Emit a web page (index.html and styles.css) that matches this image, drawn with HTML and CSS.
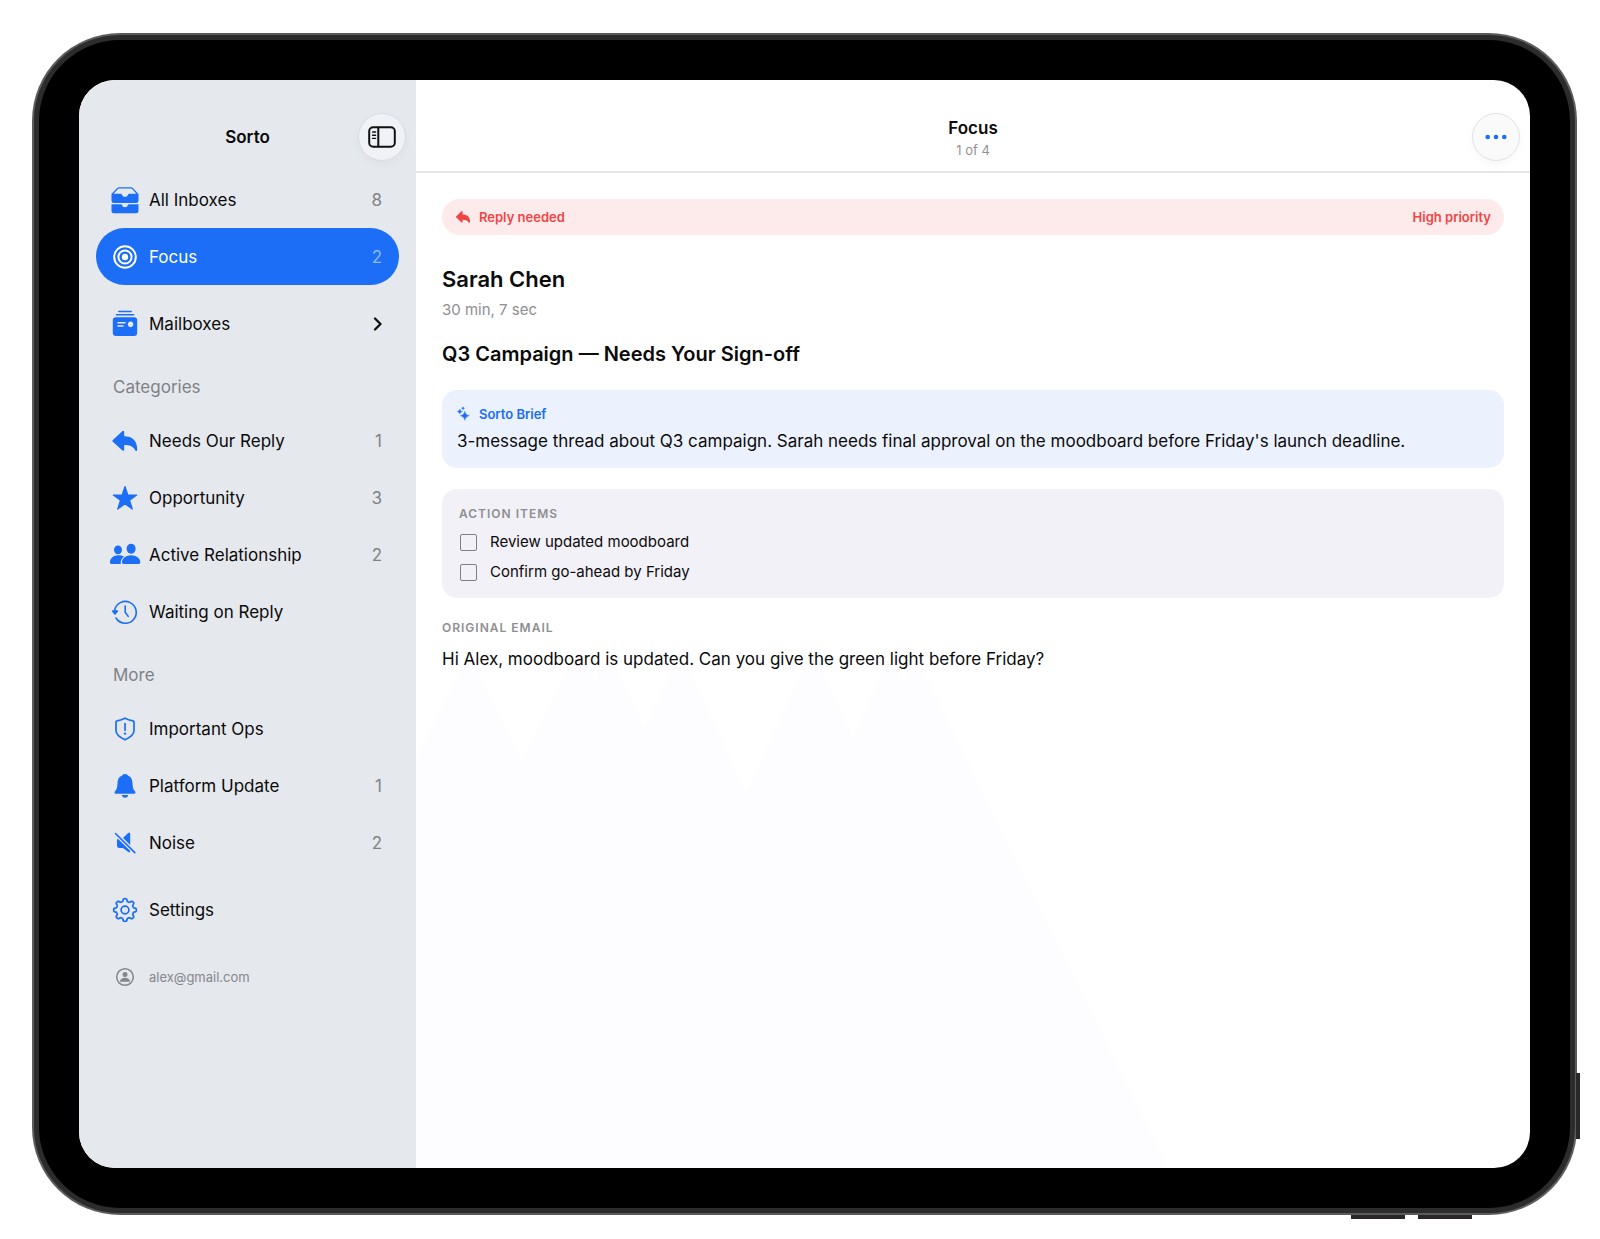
FILE: index.html
```html
<!DOCTYPE html>
<html lang="en">
<head>
<meta charset="utf-8">
<meta name="viewport" content="width=device-width, initial-scale=1">
<title>Sorto</title>
<link rel="stylesheet" href="styles.css">
</head>
<body>
<div class="device">
  <span class="key key-power"></span>
  <span class="key key-volume-up"></span>
  <span class="key key-volume-down"></span>
  <div class="bezel">
  <div class="screen">
    <aside class="sidebar">
      <header class="sidebar-header">
        <h1 class="title">Sorto</h1>
        <button class="round-button" type="button" aria-label="Toggle sidebar">
          <svg width="28" height="22" viewBox="0 0 28 22" fill="none" stroke="#111" stroke-width="2">
            <rect x="1.2" y="1.2" width="25.6" height="19.6" rx="4"/>
            <path d="M10.3 1v20"/>
            <path d="M4.6 6h3M4.6 9.2h3M4.6 12.4h3" stroke-width="1.4" stroke-linecap="round"/>
          </svg>
        </button>
      </header>
      <nav class="nav">
        <a class="item" href="#inboxes">
          <svg class="icon" viewBox="0 0 30 30">
            <path d="M2.2 9.200 7.400 3.600Q8.200 2.800 9.400 2.800H20.600Q21.800 2.800 22.600 3.600L27.800 9.200" fill="none" stroke="currentColor" stroke-width="1.300"/>
            <path d="M1.500 8.800h9.300q.8 0 1 .8a3.300 3.300 0 0 0 6.400 0q.2-.8 1-.8h9.300v7q0 2.300-2.300 2.300H3.800q-2.300 0-2.300-2.300z"/>
            <path d="M1.500 19.200h9.500q.8 0 1 .8a3.100 3.100 0 0 0 6 0q.2-.8 1-.8h9.500v6.500q0 2.500-2.500 2.500H4q-2.500 0-2.500-2.500z"/>
          </svg>
          <span class="label">All Inboxes</span><span class="count">8</span>
        </a>
        <a class="item selected" href="#focus" aria-current="page">
          <svg class="icon" viewBox="0 0 30 30" fill="none" stroke="currentColor" stroke-width="2">
            <circle cx="15" cy="15" r="10.800"/><circle cx="15" cy="15" r="6.600"/><circle cx="15" cy="15" r="3.200" fill="currentColor" stroke="none"/>
          </svg>
          <span class="label">Focus</span><span class="count">2</span>
        </a>
        <a class="item spaced" href="#mailboxes">
          <svg class="icon" viewBox="0 0 30 30">
            <path d="M8.800 2.500h12.400M6.400 5.800h17.200" fill="none" stroke="currentColor" stroke-width="1.500" stroke-linecap="round"/>
            <path fill-rule="evenodd" d="M6 8.300h18q3.200 0 3.200 3.200v12.300q0 3.200-3.200 3.200H6q-3.200 0-3.200-3.200V11.500q0-3.200 3.200-3.200zM8 13a.8.8 0 0 0 0 1.600h7a.8.8 0 0 0 0-1.600zM8 16.200a.8.8 0 0 0 0 1.600h5a.8.8 0 0 0 0-1.600zM20.600 12.600a2.800 2.800 0 1 0 .01 0z"/>
          </svg>
          <span class="label">Mailboxes</span>
          <svg class="chevron" width="10" height="14" viewBox="0 0 10 14" fill="none" stroke="#111" stroke-width="2.300" stroke-linecap="round" stroke-linejoin="round"><path d="M3 1.500 8.500 7 3 12.500"/></svg>
        </a>
        <h2 class="section">Categories</h2>
        <a class="item" href="#reply">
          <svg class="icon" viewBox="0 0 30 30"><path d="M2.600 14.200 12.200 5.300q1.800-1.400 2 .7v4.200c8.500 0 13 4.500 13 13.600 0 1.500-1.300 1.800-2 .4-2.200-4-5.600-5.200-11-5.200v4.600q-.2 2.100-2 .7L2.600 15.600q-.7-.7 0-1.400z"/></svg>
          <span class="label">Needs Our Reply</span><span class="count">1</span>
        </a>
        <a class="item" href="#opportunity">
          <svg class="icon" viewBox="0 0 30 30" stroke="currentColor" stroke-linejoin="round" stroke-width="1.200"><path d="M15 3.500 17.800 12h8.900l-7.200 5.200 2.800 8.900-7.300-5.400-7.300 5.400 2.800-8.900L3.300 12h8.900z"/></svg>
          <span class="label">Opportunity</span><span class="count">3</span>
        </a>
        <a class="item" href="#relationship">
          <svg class="icon" viewBox="0 0 30 30">
            <ellipse cx="8" cy="9.800" rx="4" ry="4.400"/><ellipse cx="21.100" cy="8.800" rx="4.500" ry="5"/>
            <path d="M10.800 24c-.5-3.100.8-5.800 3.200-7.500-1.500-.8-3.400-1.300-5.900-1.300C3.400 15.200.1 18.500-.1 22.200q0 1.600 1.600 1.800z"/>
            <path d="M21.100 15.300c5.200 0 9.100 3.200 9.200 7 0 1.200-.6 1.700-1.900 1.700H13.900c-1.300 0-1.900-.5-1.900-1.700.1-3.800 3.900-7 9.100-7z"/>
          </svg>
          <span class="label">Active Relationship</span><span class="count">2</span>
        </a>
        <a class="item" href="#waiting">
          <svg class="icon" viewBox="0 0 30 30" fill="none" stroke="currentColor" stroke-width="1.600" stroke-linecap="round">
            <path d="M4.600 13.500A10.900 10.900 0 1 1 6 21"/><path d="M15.200 9v6.200l3 4.200"/><path d="M2.600 14h4.800L5 17z" fill="currentColor" stroke-linejoin="round"/>
          </svg>
          <span class="label">Waiting on Reply</span>
        </a>
        <h2 class="section">More</h2>
        <a class="item" href="#ops">
          <svg class="icon" viewBox="0 0 30 30" fill="none" stroke="currentColor" stroke-width="1.700" stroke-linejoin="round" stroke-linecap="round">
            <path d="M15 4.200c2.600 1.200 5 2.200 8 2.700q1 .2 1 1.300v8.400c0 4-3 6.600-9 9.200-6-2.600-9-5.200-9-9.200V8.200q0-1.100 1-1.300c3-.5 5.400-1.500 8-2.700z"/><path d="M15 9.600v6.600"/><circle cx="15" cy="19.600" r="1.200" fill="currentColor" stroke="none"/>
          </svg>
          <span class="label">Important Ops</span>
        </a>
        <a class="item" href="#platform">
          <svg class="icon" viewBox="0 0 30 30"><path d="M15 3c1.700 0 2.500.8 3 1.700 3.200 1 4.300 3.800 4.500 7.700.2 4.400 1 6 2.500 7.800.8 1 .7 2.500-1 2.500H6c-1.700 0-1.800-1.500-1-2.500 1.500-1.800 2.300-3.400 2.500-7.800.2-3.900 1.300-6.700 4.500-7.700.5-.9 1.300-1.700 3-1.700z"/><path d="M11.800 24h6.400c-.3 1.700-1.500 2.800-3.200 2.800S12.100 25.700 11.800 24z"/></svg>
          <span class="label">Platform Update</span><span class="count">1</span>
        </a>
        <a class="item" href="#noise">
          <svg class="icon" viewBox="0 0 30 30"><path d="M20.200 6v11.300L12.800 10 18 5.200Q20 3.600 20.200 6z"/><path d="M8.200 10.300 20.200 22.300V23q-.3 2.300-2.200.8L12.900 20H9.500Q7 20 7 17.500v-5q0-1.500 1.200-2.200z"/><path d="M5.500 5.500 24.800 24.600" fill="none" stroke="#e5e8ed" stroke-width="4"/><path d="M5.500 5.500 24.800 24.600" fill="none" stroke="currentColor" stroke-width="1.600" stroke-linecap="round"/></svg>
          <span class="label">Noise</span><span class="count">2</span>
        </a>
        <a class="item spaced" href="#settings">
          <svg class="icon" viewBox="0 0 30 30" fill="none" stroke="currentColor" stroke-width="1.700" stroke-linejoin="round">
            <circle cx="15" cy="15" r="3.900"/>
            <path id="gear" d=""/>
          </svg>
          <span class="label">Settings</span>
        </a>
        <a class="item spaced account" href="#account">
          <svg class="icon" viewBox="0 0 30 30"><circle cx="15" cy="15" r="8.300" fill="none" stroke="currentColor" stroke-width="1.500"/><circle cx="15" cy="12.500" r="2.500"/><path d="M10 19.200c.4-2.200 2.400-3.500 5-3.500s4.600 1.300 5 3.500q0 .6-.6.6h-8.800q-.6 0-.6-.6z"/></svg>
          <span class="label">alex@gmail.com</span>
        </a>
      </nav>
    </aside>
    <main class="main">
      <svg class="backdrop" viewBox="0 0 1114 1088" preserveAspectRatio="none" aria-hidden="true">
        <path d="M0 680 48 582H56L106 682 154 582H170L179 603 188 582H197L229 647 260 582H270L330 712 391 582H402L437 658 471 582H480L488 602 496 582H503L752 1088H0z"/>
      </svg>
      <header class="main-header">
        <div class="heading">
          <h2 class="title">Focus</h2>
          <p class="position">1 of 4</p>
        </div>
        <button class="round-button more" type="button" aria-label="More actions">
          <svg width="22" height="6" viewBox="0 0 22 6" fill="#1b6ef5"><circle cx="2.700" cy="3" r="2.300"/><circle cx="11" cy="3" r="2.300"/><circle cx="19.300" cy="3" r="2.300"/></svg>
        </button>
      </header>
      <article class="message">
        <div class="banner">
          <svg class="small-icon" width="16" height="16" viewBox="0 0 30 30"><path d="M2 14.200 12.200 4.300q1.800-1.400 2 .7v5.200c8.500 0 14 4.500 14 13.600 0 2-1.800 2.400-3 .9-2.200-3.500-5.600-4.700-11-4.700v4.600q-.2 2.100-2 .7L2 15.600q-.7-.7 0-1.400z"/></svg>
          <span>Reply needed</span><span class="priority">High priority</span>
        </div>
        <h3 class="sender">Sarah Chen</h3>
        <p class="age">30 min, 7 sec</p>
        <h3 class="subject">Q3 Campaign — Needs Your Sign-off</h3>
        <section class="card brief">
          <h4 class="brief-title">
            <svg class="small-icon" width="14" height="16" viewBox="0 0 14 16"><path d="M7.800 5.300q.6 3.800 4.500 4.400-3.900.7-4.500 4.600-.6-3.900-4.500-4.600 3.900-.6 4.500-4.400zM2.800 3.200q.4 2 2.500 2.400Q3.200 6 2.800 8 2.400 6 .3 5.600 2.400 5.200 2.800 3.200zM6 .8q.3 1.200 1.500 1.500Q6.300 2.600 6 3.800 5.700 2.600 4.500 2.300 5.700 2 6 .8z" stroke="currentColor" stroke-width=".4"/></svg>
            Sorto Brief
          </h4>
          <p class="body">3-message thread about Q3 campaign. Sarah needs final approval on the moodboard before Friday's launch deadline.</p>
        </section>
        <section class="card actions">
          <h4 class="caption">ACTION ITEMS</h4>
          <label class="task"><input type="checkbox" class="check">Review updated moodboard</label>
          <label class="task"><input type="checkbox" class="check">Confirm go-ahead by Friday</label>
        </section>
        <h4 class="caption">ORIGINAL EMAIL</h4>
        <p class="body original">Hi Alex, moodboard is updated. Can you give the green light before Friday?</p>
      </article>
    </main>
  </div>
  </div>
</div>
<script src="gear.js"></script>
</body>
</html>
```
FILE: styles.css
```css
* { box-sizing: border-box; }
body {
  margin: 0;
  min-height: 100vh;
  display: flex;
  padding: 33px 23px 24px 32px;
  background: #fff;
  color: #0b0b0b;
  font-family: Inter, "Liberation Sans", sans-serif;
  font-size: 17px;
  line-height: 22px;
}
h1, h2, h3, h4, p { margin: 0; font: inherit; }
.device {
  position: relative;
  flex: 1;
  display: flex;
  padding: 2px;
  border-radius: 88px;
  background: #5c5c5c;
}
.bezel {
  flex: 1;
  display: flex;
  border: 5px solid #2c2c2c;
  border-radius: 86px;
  background: #000;
  padding: 40px;
}
.key { position: absolute; background: #2a2728; }
.key-power { right: -3px; bottom: 76px; width: 4px; height: 66px; }
.key-volume-up, .key-volume-down { bottom: -4px; width: 54px; height: 4px; }
.key-volume-up { right: 172px; }
.key-volume-down { right: 105px; }
.screen {
  flex: 1;
  display: flex;
  border-radius: 36px;
  overflow: hidden;
  background: #fff;
}
.sidebar { flex: 0 0 337px; background: #e5e8ed; }
.sidebar-header {
  display: grid;
  grid-template-columns: 1fr auto 1fr;
  align-items: center;
  height: 91px;
  padding: 23px 10px 0;
}
.title { grid-column: 2; font-weight: 600; }
.round-button {
  justify-self: end;
  display: grid;
  place-items: center;
  width: 48px;
  height: 48px;
  padding: 0;
  border: 1px solid #dadce1;
  border-radius: 50%;
  background: #f0f2f8;
  box-shadow: 0 4px 10px rgba(0, 0, 0, .03);
}
.round-button.more { border-color: #e2e2e2; background: #fafafa; }
.nav { padding: 0 17px; }
.item {
  display: flex;
  align-items: center;
  height: 57px;
  padding: 0 17px 0 14px;
  border-radius: 29px;
  color: inherit;
  text-decoration: none;
}
.icon { flex: none; width: 30px; height: 30px; margin-right: 9px; color: #1b6ef5; fill: currentColor; overflow: visible; }
.icon[fill="none"] { fill: none; }
.label { flex: 1; }
.count { color: #808287; }
.spaced { margin-top: 10px; }
.selected, .selected .icon { background: #1b6ef5; color: #fff; }
.selected .count { color: #8db7fa; }
.section { height: 60px; padding: 24px 17px 0; color: #808287; }
.account { color: #85878c; font-size: 13px; }
.account .icon { color: inherit; }
.main { position: relative; flex: 1; min-width: 0; }
.backdrop { position: absolute; inset: 0; width: 100%; height: 100%; fill: #fdfdff; }
.main-header, .message { position: relative; }
.main-header {
  display: grid;
  grid-template-columns: 1fr auto 1fr;
  align-items: center;
  height: 93px;
  padding: 22px 10px 0;
  border-bottom: 2px solid #e5e5e5;
}
.heading { grid-column: 2; padding-top: 4px; text-align: center; }
.position { color: #929296; font-size: 13px; }
.message { padding: 26px; }
.banner {
  display: flex;
  align-items: center;
  height: 36px;
  padding: 0 13px;
  border-radius: 18px;
  background: #fdebeb;
  color: #f04545;
  font-size: 13px;
  font-weight: 600;
}
.small-icon { flex: none; margin-right: 8px; fill: currentColor; }
.priority { margin-left: auto; }
.sender { margin-top: 30px; font-size: 22px; line-height: 28px; font-weight: 600; }
.age { margin-top: 6px; color: #8e8e93; font-size: 15px; }
.subject { margin-top: 19px; font-size: 20px; line-height: 28px; font-weight: 600; }
.card { border-radius: 15px; }
.brief { margin-top: 22px; padding: 13px 15px; background: #ebf2fe; }
.brief-title { display: flex; align-items: center; margin-bottom: 2px; color: #1b6ef5; font-size: 13px; font-weight: 600; }
.body { line-height: 28px; }
.actions { margin: 21px 0 19px; padding: 14px 17px 11px; background: #f2f1f7; }
.caption { margin-bottom: 2px; color: #8e8e93; font-size: 12px; font-weight: 600; letter-spacing: 1px; }
.task { display: flex; align-items: center; height: 30px; font-size: 15px; }
.check {
  appearance: none;
  width: 17px;
  height: 17px;
  margin: 0 13px 0 1px;
  border: 1px solid #7f7f84;
  border-radius: 2px;
}
.check:checked { background: #1b6ef5; }
.original { margin-top: 6px; }
```
FILE: gear.js
```js
// Traces the eight-toothed outline of the settings gear.
const teeth = 8;
const steps = 160;
const outline = [];
for (let i = 0; i < steps; i++) {
  const angle = (i * 2 * Math.PI) / steps;
  const radius = 10 + 1.3 * Math.tanh(2.5 * Math.cos(teeth * angle));
  outline.push(`${(15 + radius * Math.cos(angle)).toFixed(2)} ${(15 + radius * Math.sin(angle)).toFixed(2)}`);
}
document.getElementById("gear").setAttribute("d", `M${outline.join("L")}Z`);
```
